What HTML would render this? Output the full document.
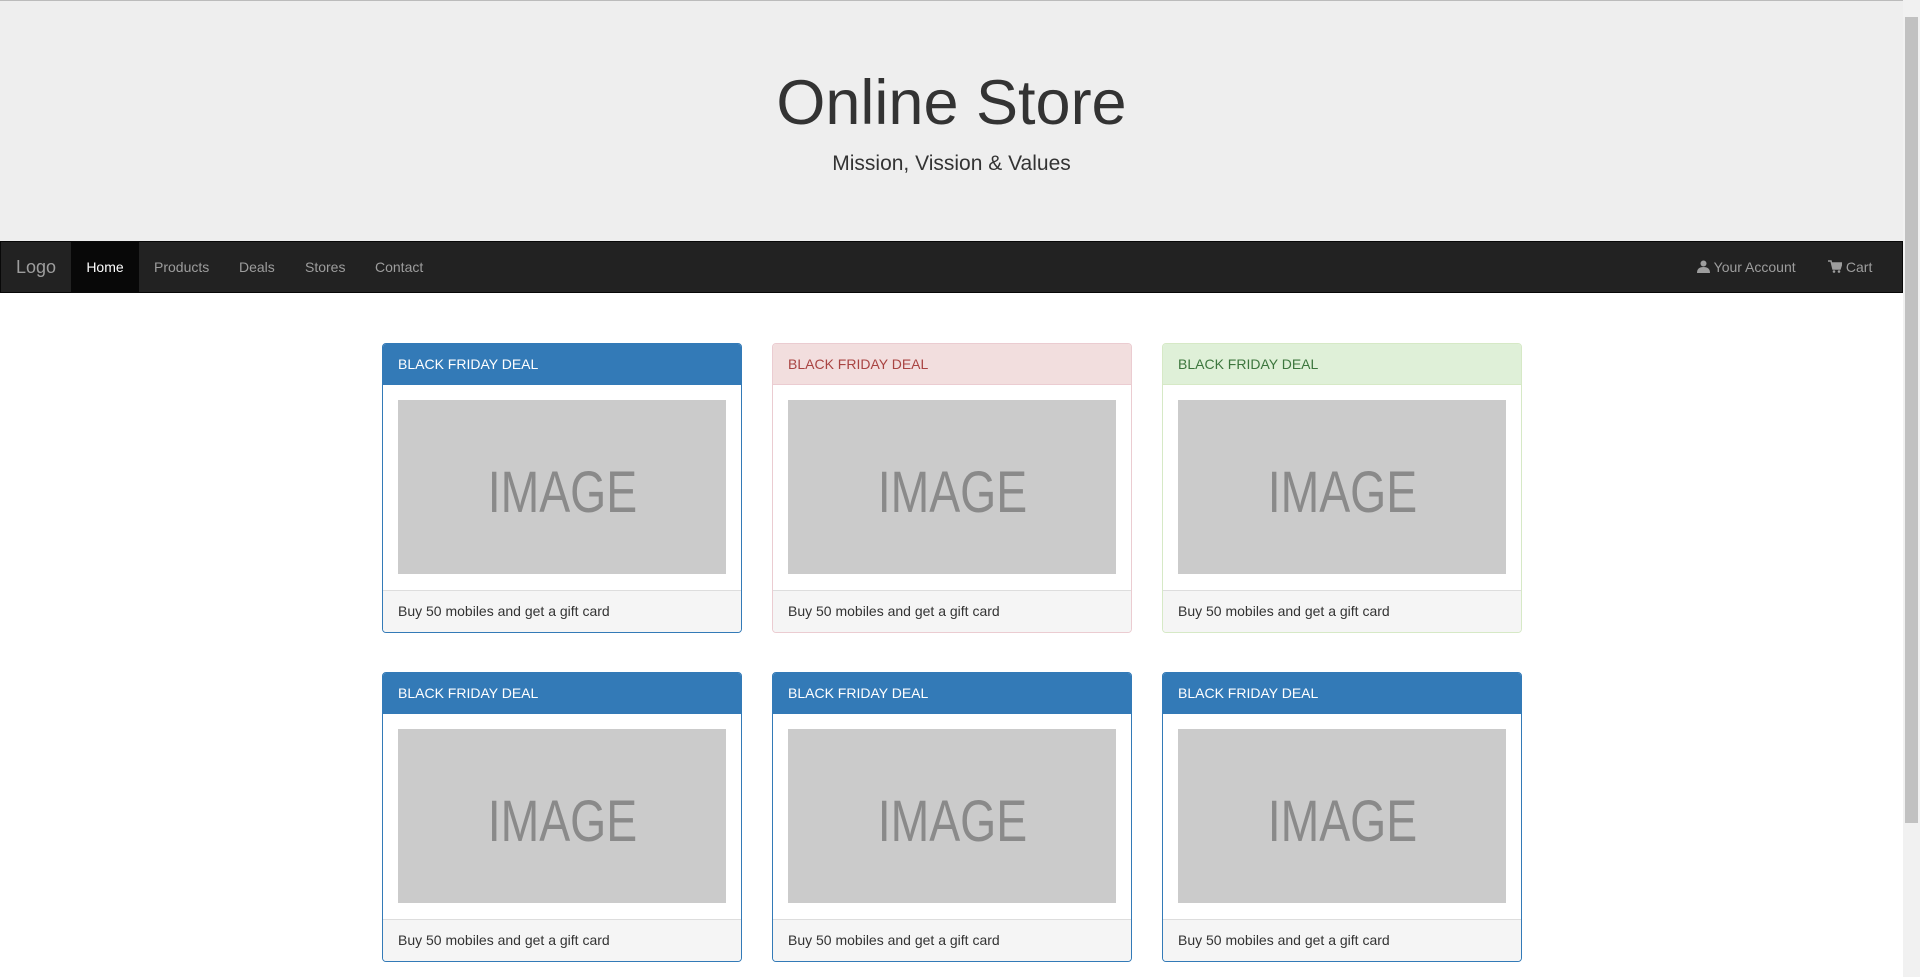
<!DOCTYPE html>
<html><head><meta charset="utf-8"><style>
*{box-sizing:border-box;margin:0;padding:0}
html,body{width:1920px;height:977px;overflow:hidden;background:#fff;font-family:"Liberation Sans",Arial,sans-serif;color:#333}
.page{position:absolute;left:0;top:0;width:1903px;height:977px}
.jumbo{position:absolute;left:0;top:0;width:1903px;height:241px;background:#eee;border-top:1px solid #bbb}
.t{position:absolute;left:0;width:1903px;text-align:center}
.t1{top:62px;font-size:63px;line-height:80px}
.t2{top:149px;font-size:21px;line-height:28px}
.nav{position:absolute;left:0;top:241px;width:1903px;height:52px;background:#222;border:1px solid #080808}
.nav a{position:absolute;top:0;height:50px;line-height:50px;font-size:14px;color:#9d9d9d;text-decoration:none}
.logo{left:15px;font-size:18px!important}
.home{left:70px;width:68px;background:#080808;color:#fff!important;text-align:center}
.scr{position:absolute;left:1903px;top:0;width:17px;height:977px;background:#f1f1f1}
.thumb{position:absolute;left:2px;top:17px;width:13px;height:806px;background:#c1c1c1}
.card{position:absolute;width:360px;height:290px;border:1px solid #337ab7;border-radius:4px;overflow:hidden;background:#fff}
.hd{height:41px;padding:0 15px;line-height:40px;font-size:14px;background:#337ab7;color:#fff;border-bottom:1px solid #337ab7}
.img{position:absolute;left:15px;top:56px;width:328px;height:174px;background:#cbcbcb;color:#8a8a8a;font-size:58px;text-align:center;line-height:186px}
.img span{display:inline-block;transform:scaleX(0.8)}
.ft{position:absolute;left:0;bottom:0;width:100%;height:42px;background:#f5f5f5;border-top:1px solid #ddd;padding:0 15px;line-height:41px;font-size:14px}
.d{border-color:#ebccd1}.d .hd{background:#f2dede;color:#a94442;border-color:#ebccd1}
.s{border-color:#d6e9c6}.s .hd{background:#dff0d8;color:#3c763d;border-color:#d6e9c6}
</style></head><body><div class="page">
<div class="jumbo"><div class="t t1">Online Store</div><div class="t t2">Mission, Vission &amp; Values</div></div>
<div class="nav">
<a class="logo">Logo</a><a class="home">Home</a>
<a style="left:153px">Products</a><a style="left:238px">Deals</a><a style="left:304px">Stores</a><a style="left:374px">Contact</a>
<a style="left:1696px"><svg width="13" height="13" viewBox="0 0 13 13" style="vertical-align:-1px"><circle cx="6.5" cy="3.5" r="3" fill="#9d9d9d"/><path d="M0 13 Q0 7 6.5 7 Q13 7 13 13Z" fill="#9d9d9d"/></svg> Your Account</a>
<a style="left:1827px"><svg width="14" height="13" viewBox="0 0 14 13" style="vertical-align:-1px"><path d="M0 1H3L5 9H12L14 3H4" fill="none" stroke="#9d9d9d" stroke-width="1.5"/><path d="M4 3H14L12 9H5Z" fill="#9d9d9d"/><circle cx="6" cy="11.5" r="1.3" fill="#9d9d9d"/><circle cx="11" cy="11.5" r="1.3" fill="#9d9d9d"/></svg> Cart</a>
</div>
<div class="card" style="left:382px;top:343px"><div class="hd">BLACK FRIDAY DEAL</div><div class="img"><span>IMAGE</span></div><div class="ft">Buy 50 mobiles and get a gift card</div></div>
<div class="card d" style="left:772px;top:343px"><div class="hd">BLACK FRIDAY DEAL</div><div class="img"><span>IMAGE</span></div><div class="ft">Buy 50 mobiles and get a gift card</div></div>
<div class="card s" style="left:1162px;top:343px"><div class="hd">BLACK FRIDAY DEAL</div><div class="img"><span>IMAGE</span></div><div class="ft">Buy 50 mobiles and get a gift card</div></div>
<div class="card" style="left:382px;top:672px"><div class="hd">BLACK FRIDAY DEAL</div><div class="img"><span>IMAGE</span></div><div class="ft">Buy 50 mobiles and get a gift card</div></div>
<div class="card" style="left:772px;top:672px"><div class="hd">BLACK FRIDAY DEAL</div><div class="img"><span>IMAGE</span></div><div class="ft">Buy 50 mobiles and get a gift card</div></div>
<div class="card" style="left:1162px;top:672px"><div class="hd">BLACK FRIDAY DEAL</div><div class="img"><span>IMAGE</span></div><div class="ft">Buy 50 mobiles and get a gift card</div></div>
</div>
<div class="scr"><div class="thumb"></div></div>
</body></html>
